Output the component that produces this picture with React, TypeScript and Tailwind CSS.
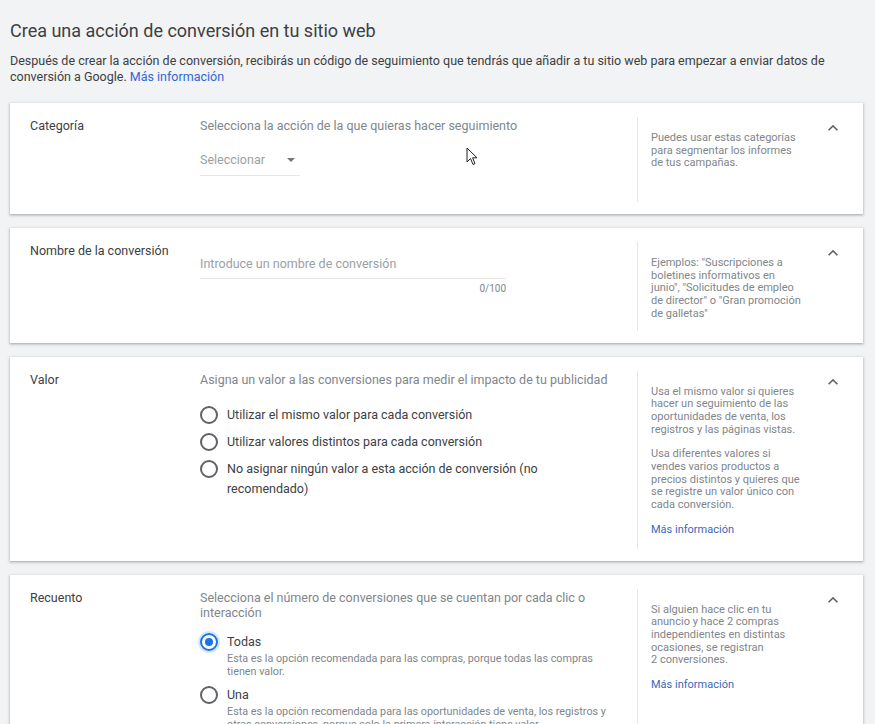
import React from "react";

const helperText = "text-[11px] leading-[12.7px] text-[#80868b]";

function Chevron() {
  return (
    <svg width="20" height="20" viewBox="0 0 24 24" fill="#5f6368">
      <path d="M12 8l-6 6 1.41 1.41L12 10.83l4.59 4.58L18 14z" />
    </svg>
  );
}

function Radio({ checked = false }: { checked?: boolean }) {
  return checked ? (
    <span className="mt-[1px] flex h-[18px] w-[18px] shrink-0 items-center justify-center rounded-full border-2 border-[#1a73e8] shadow-[0_0_0_2px_rgba(26,115,232,0.18)]">
      <span className="h-[8px] w-[8px] rounded-full bg-[#1a73e8]" />
    </span>
  ) : (
    <span className="mt-[1px] h-[18px] w-[18px] shrink-0 rounded-full border-2 border-[#5f6368]" />
  );
}

function Section({
  label,
  helper,
  children,
  cursor = false,
  tight = false,
}: {
  label: string;
  helper: React.ReactNode;
  children: React.ReactNode;
  cursor?: boolean;
  tight?: boolean;
}) {
  return (
    <div className="relative flex bg-white pb-[12px] pl-[20px] pr-[20px] pt-[14px] shadow-[0_1px_2px_rgba(60,64,67,0.3),0_1px_3px_1px_rgba(60,64,67,0.12)]">
      <div className="w-[170px] shrink-0 pt-[1px] text-[12.5px] leading-[16px] text-[#3c4043]">{label}</div>
      <div className="mr-[27px] w-[410px] shrink-0 pt-[1px]">{children}</div>
      <div
        className={
          tight
            ? "min-h-[85px] w-[166px] shrink-0 border-l border-[#e6e6e6] pb-[10px] pl-[13px] pt-[15px]"
            : "min-h-[85px] w-[166px] shrink-0 border-l border-[#e6e6e6] pb-[12px] pl-[13px] pt-[15px]"
        }
      >
        {helper}
      </div>
      <div className="flex flex-1 justify-end pt-[1px]">
        <Chevron />
      </div>
      {cursor && (
        <svg className="absolute left-[456px] top-[44px]" width="12" height="19" viewBox="0 0 12 19">
          <path d="M1 1 L1 15 L4.5 11.5 L7 17.5 L9 16.6 L6.6 10.8 L11 10.8 Z" fill="#fff" stroke="#222" strokeWidth="1" strokeLinejoin="round" />
        </svg>
      )}
    </div>
  );
}

function Option({ checked, title, sub }: { checked?: boolean; title: string; sub?: string }) {
  return (
    <div className="flex gap-[9px]">
      <Radio checked={checked} />
      <div>
        <div className="text-[12.5px] leading-[20px] text-[#3c4043]">{title}</div>
        {sub && <div className="text-[10.8px] leading-[13px] text-[#80868b]">{sub}</div>}
      </div>
    </div>
  );
}

export default function App() {
  return (
    <div className="min-h-screen bg-[#f1f3f4] pb-10 pl-[10px] pr-[12px] pt-[19px] font-['Roboto',sans-serif]">
      <h1 className="text-[18px] leading-[24px] text-[#3c4043]">Crea una acción de conversión en tu sitio web</h1>
      <p className="mt-[10px] text-[12.5px] leading-[16px] text-[#3c4043]">
        Después de crear la acción de conversión, recibirás un código de seguimiento que tendrás que añadir a tu sitio web para empezar a enviar datos de conversión a Google.{" "}
        <span className="text-[#3367d6]">Más información</span>
      </p>

      <div className="mt-[18px] flex flex-col gap-[14px]">
        <Section
          label="Categoría"
          cursor
          helper={<p className={helperText}>Puedes usar estas categorías para segmentar los informes de tus campañas.</p>}
        >
          <div className="text-[12.5px] leading-[16px] text-[#80868b]">Selecciona la acción de la que quieras hacer seguimiento</div>
          <div className="mt-[18px] flex w-[100px] items-center justify-between border-b border-[#e6e6e6] pb-[7px] pr-[5px]">
            <span className="text-[12.5px] leading-[16px] text-[#9aa0a6]">Seleccionar</span>
            <span className="h-0 w-0 border-x-[4px] border-t-[4px] border-x-transparent border-t-[#757575]" />
          </div>
        </Section>

        <Section
          label="Nombre de la conversión"
          tight
          helper={
            <p className={helperText}>
              Ejemplos: "Suscripciones a boletines informativos en junio", "Solicitudes de empleo de director" o "Gran promoción de galletas"
            </p>
          }
        >
          <div className="mt-[13px] w-[306px]">
            <div className="border-b border-[#e6e6e6] pb-[6px] text-[12.5px] leading-[16px] text-[#9aa0a6]">Introduce un nombre de conversión</div>
            <div className="mt-[4px] text-right text-[10px] leading-[12px] text-[#80868b]">0/100</div>
          </div>
        </Section>

        <Section
          label="Valor"
          helper={
            <div className={helperText}>
              <p>Usa el mismo valor si quieres hacer un seguimiento de las oportunidades de venta, los registros y las páginas vistas.</p>
              <p className="mt-[12px]">Usa diferentes valores si vendes varios productos a precios distintos y quieres que se registre un valor único con cada conversión.</p>
              <p className="mt-[12px] text-[#3c67b9]">Más información</p>
            </div>
          }
        >
          <div className="text-[12.5px] leading-[16px] text-[#80868b]">Asigna un valor a las conversiones para medir el impacto de tu publicidad</div>
          <div className="mt-[17px] flex flex-col gap-[7px]">
            <Option title="Utilizar el mismo valor para cada conversión" />
            <Option title="Utilizar valores distintos para cada conversión" />
            <Option title="No asignar ningún valor a esta acción de conversión (no recomendado)" />
          </div>
        </Section>

        <Section
          label="Recuento"
          helper={
            <div className={helperText}>
              <p>Si alguien hace clic en tu anuncio y hace 2 compras independientes en distintas ocasiones, se registran 2&nbsp;conversiones.</p>
              <p className="mt-[12px] text-[#3c67b9]">Más información</p>
            </div>
          }
        >
          <div className="text-[12.5px] leading-[15px] text-[#80868b]">Selecciona el número de conversiones que se cuentan por cada clic o interacción</div>
          <div className="mt-[12px] flex flex-col gap-[7px]">
            <Option checked title="Todas" sub="Esta es la opción recomendada para las compras, porque todas las compras tienen valor." />
            <Option
              title="Una"
              sub="Esta es la opción recomendada para las oportunidades de venta, los registros y otras conversiones, porque solo la primera interacción tiene valor."
            />
          </div>
        </Section>
      </div>
    </div>
  );
}
